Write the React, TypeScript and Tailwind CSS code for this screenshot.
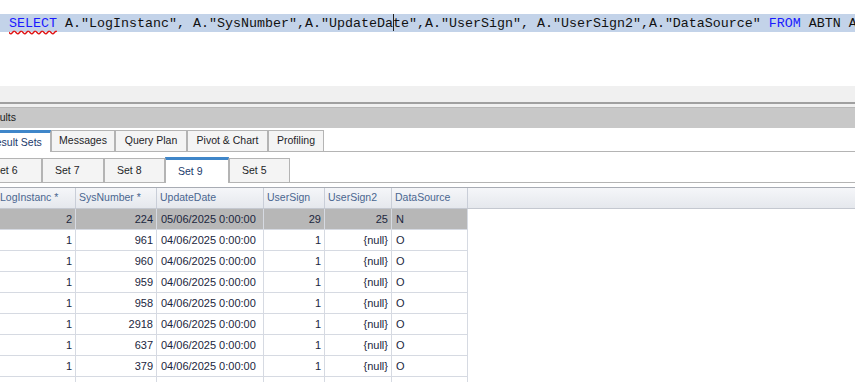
import React from 'react';

const cols = [
  { key: 'li', label: 'LogInstanc *', w: 'w-[79px] -ml-[3px]', right: true },
  { key: 'sn', label: 'SysNumber *', w: 'w-[81px]', right: true },
  { key: 'ud', label: 'UpdateDate', w: 'w-[107px]', right: false },
  { key: 'us', label: 'UserSign', w: 'w-[61px]', right: true },
  { key: 'us2', label: 'UserSign2', w: 'w-[67px]', right: true },
  { key: 'ds', label: 'DataSource', w: 'w-[76px]', right: false },
] as const;

type Row = Record<(typeof cols)[number]['key'], string>;

const d = '04/06/2025 0:00:00';
const rows: Row[] = [
  { li: '2', sn: '224', ud: '05/06/2025 0:00:00', us: '29', us2: '25', ds: 'N' },
  { li: '1', sn: '961', ud: d, us: '1', us2: '{null}', ds: 'O' },
  { li: '1', sn: '960', ud: d, us: '1', us2: '{null}', ds: 'O' },
  { li: '1', sn: '959', ud: d, us: '1', us2: '{null}', ds: 'O' },
  { li: '1', sn: '958', ud: d, us: '1', us2: '{null}', ds: 'O' },
  { li: '1', sn: '2918', ud: d, us: '1', us2: '{null}', ds: 'O' },
  { li: '1', sn: '637', ud: d, us: '1', us2: '{null}', ds: 'O' },
  { li: '1', sn: '379', ud: d, us: '1', us2: '{null}', ds: 'O' },
  { li: '', sn: '', ud: '', us: '', us2: '', ds: '' },
];

const topTabs = [
  { label: 'Result Sets', w: 'w-[72px] -ml-[21px]', active: true },
  { label: 'Messages', w: 'w-[64px]' },
  { label: 'Query Plan', w: 'w-[72px]' },
  { label: 'Pivot & Chart', w: 'w-[81px]' },
  { label: 'Profiling', w: 'w-[56px]' },
];

const setTabs = [
  { label: 'Set 6', w: 'w-[62px] -ml-[20px]' },
  { label: 'Set 7', w: 'w-[62px]' },
  { label: 'Set 8', w: 'w-[61px]' },
  { label: 'Set 9', w: 'w-[64px]', active: true },
  { label: 'Set 5', w: 'w-[61px]' },
];

export default function App() {
  return (
    <div className="w-[855px] h-[382px] overflow-hidden bg-white font-['Liberation_Sans',sans-serif] text-[10.5px]">
      {/* SQL editor */}
      <div className="h-[86px] pt-[14px]">
        <div className="h-[18px] bg-[#c3d3e9] pl-[9px] whitespace-nowrap font-['Liberation_Mono',monospace] text-[13.33px] leading-[19px] text-[#111]">
          <span className="text-[#1a1aff] underline decoration-wavy decoration-[#e01010] underline-offset-[3px]">SELECT</span>
          {' A."LogInstanc", A."SysNumber",A."UpdateDa'}
          <span className="relative">
            <span className="absolute left-0 -top-[2px] h-[17px] w-px bg-[#222]" />
          </span>
          {'te",A."UserSign", A."UserSign2",A."DataSource" '}
          <span className="text-[#1a1aff]">FROM</span>
          {' ABTN A'}
        </div>
      </div>

      {/* splitter */}
      <div className="h-[16px] bg-[#f0f0f0]" />
      <div className="h-[2px] bg-[#a0a0a0]" />
      <div className="h-[3px] bg-[#f0f0f0]" />
      <div className="h-px bg-[#b8b8b8]" />

      {/* Results header */}
      <div className="h-[20px] bg-[#c8c8c8] flex items-center text-[#222] whitespace-nowrap">
        <span className="-ml-[19px]">Results</span>
      </div>

      {/* Top tabs */}
      <div className="h-[24px] flex items-end border-b border-[#b4b4b4] whitespace-nowrap">
        {topTabs.map((t) =>
          t.active ? (
            <div
              key={t.label}
              className={`${t.w} shrink-0 h-[22px] -mb-px bg-white border-x border-[#b4b4b4] border-t-[3px] border-t-[#3f86c9] flex items-center justify-center text-[#1b3a6b]`}
            >
              {t.label}
            </div>
          ) : (
            <div
              key={t.label}
              className={`${t.w} shrink-0 h-[21px] bg-[#f4f4f4] border border-b-0 border-[#b4b4b4] flex items-center justify-center text-[#1e1e28]`}
            >
              {t.label}
            </div>
          )
        )}
      </div>

      {/* Set tabs */}
      <div className="h-[31px] flex items-end border-b border-[#b4b4b4] whitespace-nowrap">
        {setTabs.map((t) =>
          t.active ? (
            <div
              key={t.label}
              className={`${t.w} shrink-0 h-[26px] -mb-px pl-[12px] bg-white border-x border-[#b4b4b4] border-t-[3px] border-t-[#3f86c9] flex items-center text-[#1b3a6b]`}
            >
              {t.label}
            </div>
          ) : (
            <div
              key={t.label}
              className={`${t.w} shrink-0 h-[24px] pl-[12px] bg-[#f4f4f4] border border-b-0 border-[#b4b4b4] flex items-center text-[#1e1e28]`}
            >
              {t.label}
            </div>
          )
        )}
      </div>

      {/* Grid */}
      <div className="mt-[4px] whitespace-nowrap">
        <div className="h-[22px] flex border-y border-t-[#a8acb4] border-b-[#c4c8d0] bg-gradient-to-b from-[#f5f6f9] to-[#e5e8ed] text-[#4a6690]">
          {cols.map((c) => (
            <div key={c.key} className={`${c.w} shrink-0 border-r border-[#c9ced8] pl-[3px] flex items-center`}>
              {c.label}
            </div>
          ))}
        </div>
        {rows.map((r, i) => (
          <div key={i} className="flex h-[21px]">
            <div className={`flex border-b border-[#d6dae2] ${i === 0 ? 'bg-[#b7b7b7]' : 'bg-white'}`}>
              {cols.map((c) => (
                <div
                  key={c.key}
                  className={`${c.w} shrink-0 border-r border-[#d6dae2] flex items-center text-[11px] text-[#1b263d] ${
                    c.right ? 'justify-end pr-[3px]' : 'pl-[4px]'
                  }`}
                >
                  {r[c.key]}
                </div>
              ))}
            </div>
          </div>
        ))}
      </div>
    </div>
  );
}
